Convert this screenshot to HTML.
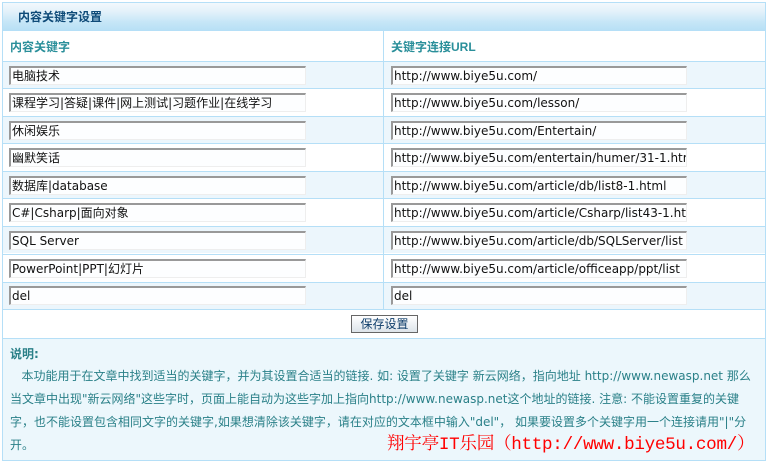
<!DOCTYPE html>
<html><head><meta charset="utf-8"><style>
*{margin:0;padding:0;box-sizing:border-box}
body{width:768px;height:463px;background:#fff;position:relative;overflow:hidden;font-family:"DejaVu Sans","Noto Sans CJK SC",sans-serif;font-size:12px}
.a{position:absolute}
.frame{left:2px;top:2px;width:764px;height:459px;border:1px solid #b5dff7}
.hd{left:3px;top:3px;width:762px;height:27px;background:linear-gradient(#f2f8fc 0%,#e4f2fa 30%,#c6e6f7 70%,#b8e0f5 100%);color:#0e4a78;font-weight:bold;padding:5px 0 0 15px;font-family:"Liberation Sans","Noto Sans CJK SC",sans-serif}
.hline{height:1px;background:#b5dff7;left:3px;width:762px}
.vline{width:1px;background:#b5dff7;left:383px}
.row{left:3px;width:762px}
.in{position:absolute;height:19px;background:#fdfeff;border-top:2px solid #999;border-left:2px solid #999;border-right:1px solid #eee;border-bottom:1px solid #eee;font-size:12px;color:#111;padding:1px 0 0 1px;white-space:nowrap;overflow:hidden;line-height:15px}
.ch{color:#2a8f9a;font-weight:bold;font-family:"Liberation Sans","Noto Sans CJK SC",sans-serif}
.btn{left:351px;top:315px;width:67px;height:18px;border:1px solid #666;background:linear-gradient(#fff,#dde4ea);color:#0e3d6a;font-size:12px;text-align:center;line-height:16px}
.ex{left:3px;top:339px;width:762px;height:121px;background:#ecf7fc;color:#2a8088;font-size:12px;line-height:23px;padding:4px 6px 0 7px}
.sig{color:#f00;font-family:"Liberation Mono","Noto Serif CJK SC",monospace;font-size:17.6px;position:absolute;left:384px;top:95px;letter-spacing:-0.3px;white-space:nowrap}
</style></head><body>
<div class="a frame"></div>
<div class="a hd">内容关键字设置</div>
<div class="a hline" style="top:30px"></div>
<div class="a ch" style="left:10px;top:38px">内容关键字</div>
<div class="a ch" style="left:391px;top:38px">关键字连接URL</div>
<div class="a hline" style="top:61px"></div>
<div class="a row" style="top:62px;height:26px;background:#ecf6fc"></div>
<div class="a hline" style="top:88px"></div>
<div class="a hline" style="top:116px"></div>
<div class="a row" style="top:117px;height:26px;background:#ecf6fc"></div>
<div class="a hline" style="top:143px"></div>
<div class="a hline" style="top:171px"></div>
<div class="a row" style="top:172px;height:26px;background:#ecf6fc"></div>
<div class="a hline" style="top:198px"></div>
<div class="a hline" style="top:226px"></div>
<div class="a row" style="top:227px;height:26px;background:#ecf6fc"></div>
<div class="a hline" style="top:254px"></div>
<div class="a hline" style="top:282px"></div>
<div class="a row" style="top:283px;height:26px;background:#ecf6fc"></div>
<div class="a hline" style="top:309px"></div>
<div class="a vline" style="top:31px;height:278px"></div>

<div class="in" style="left:9px;top:66px;width:297px">电脑技术</div>
<div class="in" style="left:391px;top:66px;width:296px">http://www.biye5u.com/</div>
<div class="in" style="left:9px;top:93px;width:297px">课程学习|答疑|课件|网上测试|习题作业|在线学习</div>
<div class="in" style="left:391px;top:93px;width:296px">http://www.biye5u.com/lesson/</div>
<div class="in" style="left:9px;top:121px;width:297px">休闲娱乐</div>
<div class="in" style="left:391px;top:121px;width:296px">http://www.biye5u.com/Entertain/</div>
<div class="in" style="left:9px;top:148px;width:297px">幽默笑话</div>
<div class="in" style="left:391px;top:148px;width:296px">http://www.biye5u.com/entertain/humer/31-1.html</div>
<div class="in" style="left:9px;top:176px;width:297px">数据库|database</div>
<div class="in" style="left:391px;top:176px;width:296px">http://www.biye5u.com/article/db/list8-1.html</div>
<div class="in" style="left:9px;top:203px;width:297px">C#|Csharp|面向对象</div>
<div class="in" style="left:391px;top:203px;width:296px">http://www.biye5u.com/article/Csharp/list43-1.html</div>
<div class="in" style="left:9px;top:231px;width:297px">SQL Server</div>
<div class="in" style="left:391px;top:231px;width:296px">http://www.biye5u.com/article/db/SQLServer/list</div>
<div class="in" style="left:9px;top:259px;width:297px">PowerPoint|PPT|幻灯片</div>
<div class="in" style="left:391px;top:259px;width:296px">http://www.biye5u.com/article/officeapp/ppt/list</div>
<div class="in" style="left:9px;top:286px;width:297px">del</div>
<div class="in" style="left:391px;top:286px;width:296px">del</div>

<div class="a btn">保存设置</div>
<div class="a hline" style="top:338px"></div>
<div class="a ex">
<div style="font-weight:bold;line-height:22px">说明:</div>
<div>&nbsp;&nbsp;&nbsp;本功能用于在文章中找到适当的关键字，并为其设置合适当的链接. 如: 设置了关键字 新云网络，指向地址 http://www.newasp.net 那么<br>当文章中出现"新云网络"这些字时，页面上能自动为这些字加上指向http://www.newasp.net这个地址的链接. 注意: 不能设置重复的关键<br>字，也不能设置包含相同文字的关键字,如果想清除该关键字，请在对应的文本框中输入"del"，&nbsp;如果要设置多个关键字用一个连接请用"|"分<br>开。</div>
<div class="sig">翔宇亭IT乐园（http://www.biye5u.com/）</div>
</div>
</body></html>
